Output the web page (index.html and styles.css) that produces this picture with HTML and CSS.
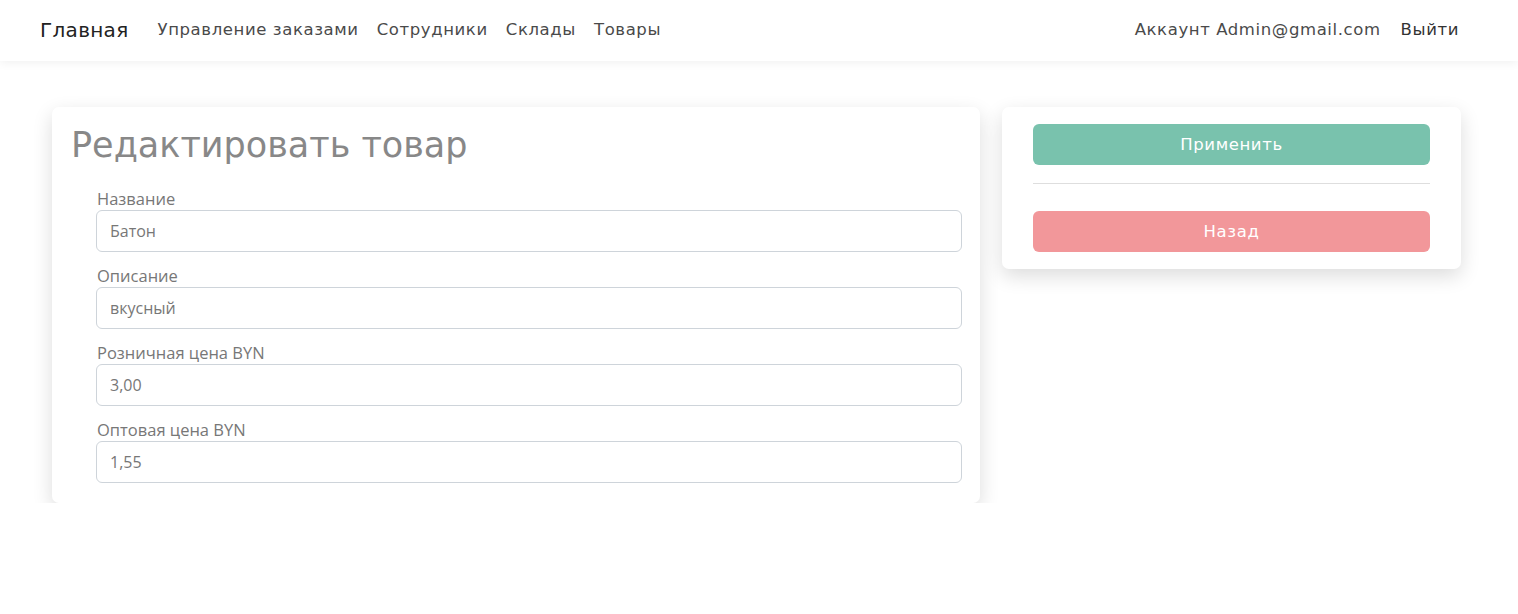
FILE: index.html
```html
<!DOCTYPE html>
<html lang="ru">
<head>
<meta charset="utf-8">
<title>Редактировать товар</title>
<link rel="stylesheet" href="styles.css">
</head>
<body>
<header class="navbar">
  <nav class="nav-left">
    <a class="brand" href="#">Главная</a>
    <a class="nav-link" href="#">Управление заказами</a>
    <a class="nav-link" href="#">Сотрудники</a>
    <a class="nav-link" href="#">Склады</a>
    <a class="nav-link" href="#">Товары</a>
  </nav>
  <nav class="nav-right">
    <a class="nav-link" href="#">Аккаунт Admin@gmail.com</a>
    <a class="nav-link dark" href="#">Выйти</a>
  </nav>
</header>
<main class="page">
  <section class="card form-card">
    <h1 class="title">Редактировать товар</h1>
    <form class="fields">
      <div class="field">
        <label class="label">Название</label>
        <input class="input" type="text" value="Батон">
      </div>
      <div class="field">
        <label class="label">Описание</label>
        <input class="input" type="text" value="вкусный">
      </div>
      <div class="field">
        <label class="label">Розничная цена BYN</label>
        <input class="input" type="text" value="3,00">
      </div>
      <div class="field">
        <label class="label">Оптовая цена BYN</label>
        <input class="input" type="text" value="1,55">
      </div>
    </form>
  </section>
  <aside class="card action-card">
    <button class="btn btn-apply" type="button">Применить</button>
    <hr class="divider">
    <button class="btn btn-back" type="button">Назад</button>
  </aside>
</main>
</body>
</html>
```
FILE: styles.css
```css
* { box-sizing: border-box; }
html, body { margin: 0; padding: 0; background: #fff; }
body { font-family: "DejaVu Sans", sans-serif; color: #333; }

.navbar {
  height: 61px;
  display: flex;
  align-items: center;
  justify-content: space-between;
  padding: 0 59px 2px 40px;
  background: #fff;
  box-shadow: 0 1px 10px rgba(0,0,0,0.07);
  position: relative;
}
.nav-left, .nav-right { display: flex; align-items: center; }
.nav-left a, .nav-right a { text-decoration: none; }
.brand {
  font-size: 20px;
  color: #222;
  margin-right: 29px;
  letter-spacing: 0.3px;
}
.nav-link {
  font-size: 16.5px;
  color: #4a4a4a;
  letter-spacing: 0.6px;
  margin-right: 18px;
}
.nav-right .nav-link { margin-right: 0; margin-left: 20px; }
.nav-link.dark { color: #333; }

.page {
  display: flex;
  align-items: flex-start;
  gap: 22px;
  padding: 46px 57px 0 52px;
}
.card {
  background: #fff;
  border-radius: 7px;
  box-shadow: 0 7px 20px rgba(0,0,0,0.14);
}
.form-card {
  width: 928px;
  padding: 16px 18px 20px 19px;
}
.title {
  margin: 0 0 21px 0;
  font-weight: 400;
  font-size: 35px;
  line-height: 44px;
  color: #888;
  letter-spacing: 0;
}
.fields { padding-left: 25px; display: flex; flex-direction: column; gap: 13px; }
.field { display: flex; flex-direction: column; }
.label {
  font-family: "Open Sans", sans-serif;
  font-size: 16.5px;
  line-height: 22px;
  color: #777;
  margin-left: 1px;
}
.input {
  height: 42px;
  width: 100%;
  border: 1px solid #ced4da;
  border-radius: 6px;
  padding: 0 13px;
  font-family: "Open Sans", sans-serif;
  font-size: 16px;
  color: #777;
  background: #fff;
}

.action-card {
  width: 459px;
  padding: 17px 31px 17px 31px;
  display: flex;
  flex-direction: column;
}
.btn {
  height: 41px;
  border: none;
  border-radius: 6px;
  color: #fff;
  font-family: "DejaVu Sans", sans-serif;
  font-size: 16.5px;
  letter-spacing: 0.6px;
  width: 100%;
}
.btn-apply { background: #79c2ad; }
.btn-back { background: #f2979a; }
.divider {
  border: none;
  border-top: 1px solid #dedede;
  margin: 18px 0 27px 0;
}
```
